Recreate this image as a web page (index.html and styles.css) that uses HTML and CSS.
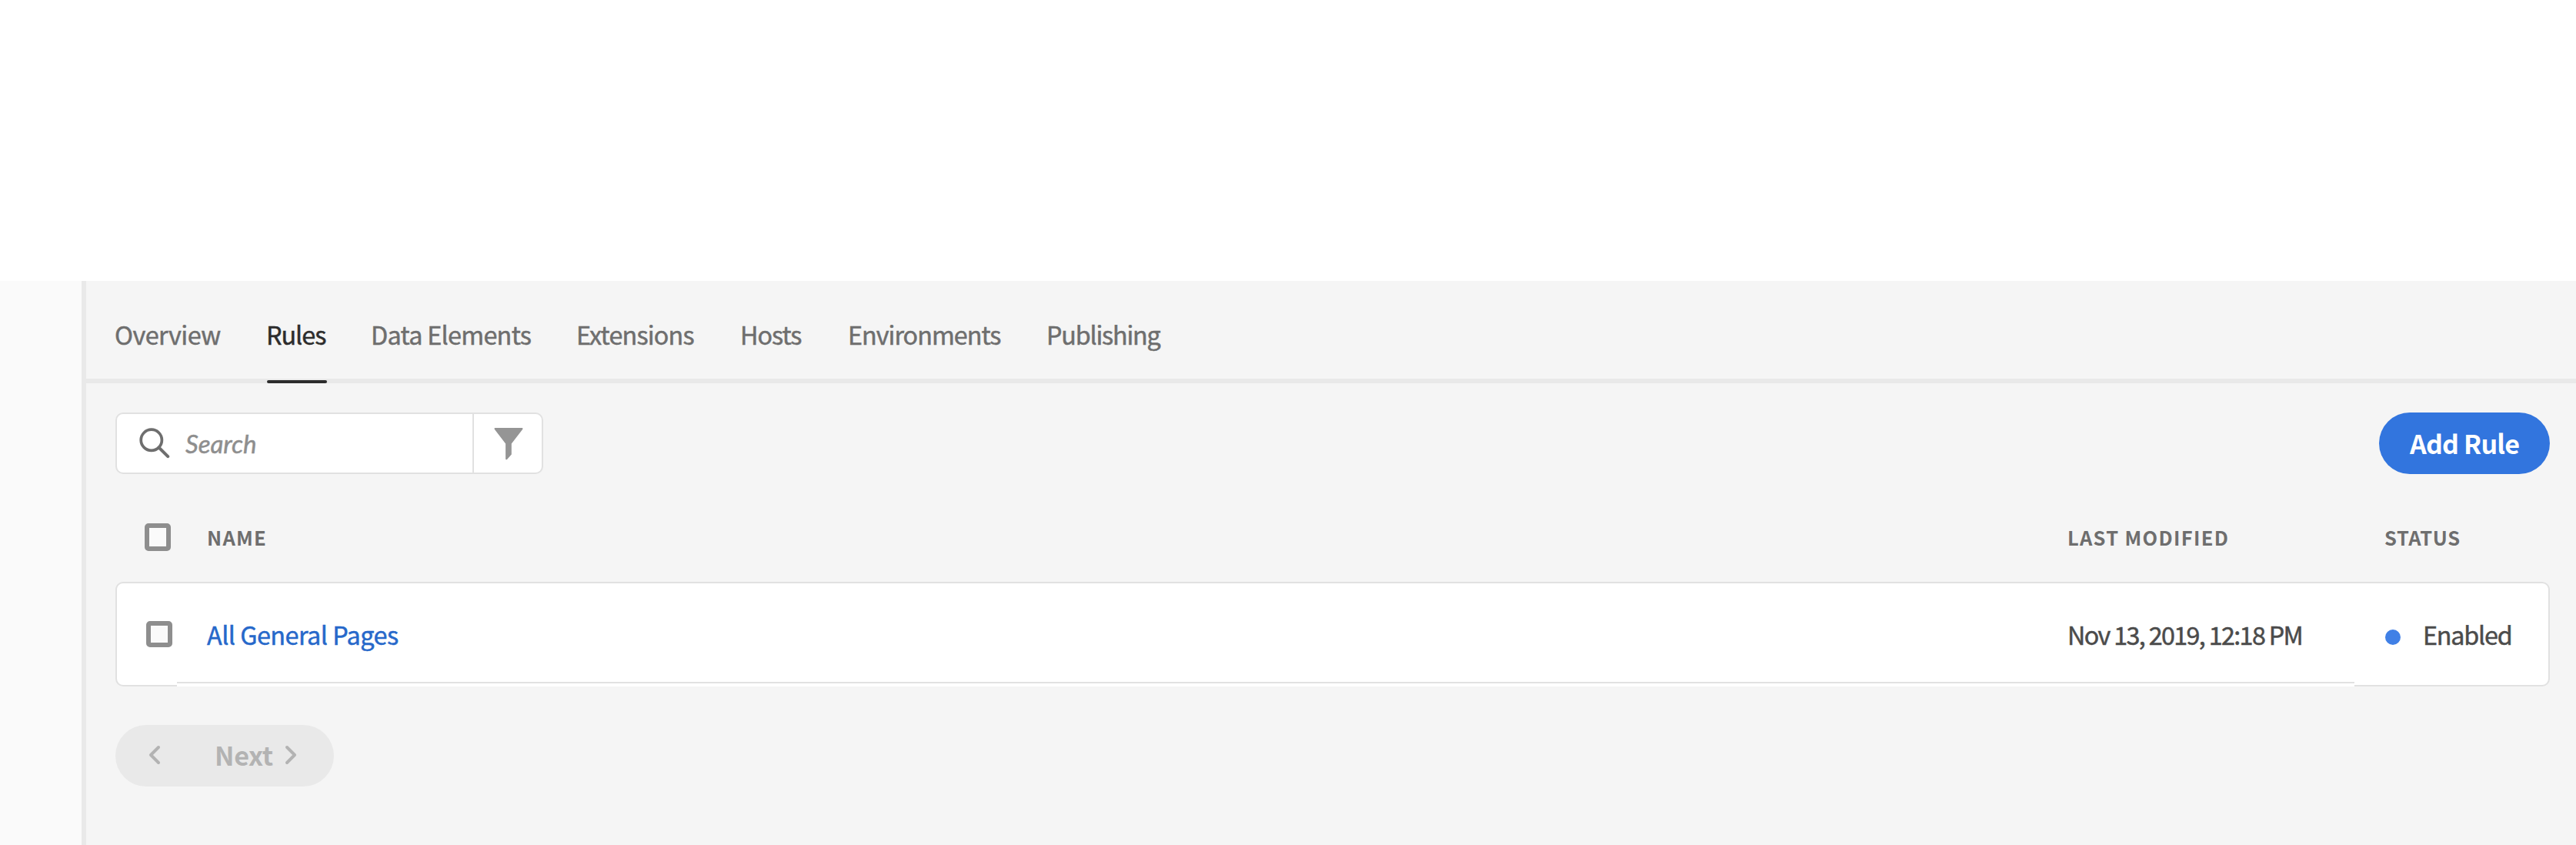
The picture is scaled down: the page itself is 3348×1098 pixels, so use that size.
FILE: index.html
```html
<!DOCTYPE html>
<html lang="en">
<head>
<meta charset="utf-8">
<title>Rules</title>
<link rel="stylesheet" href="styles.css">
</head>
<body>
<div class="shell">
  <aside class="rail"></aside>
  <main class="panel">
    <nav class="tabs">
      <a class="tab overview">Overview</a>
      <a class="tab rules active">Rules</a>
      <a class="tab elements">Data Elements</a>
      <a class="tab extensions">Extensions</a>
      <a class="tab hosts">Hosts</a>
      <a class="tab environments">Environments</a>
      <a class="tab publishing">Publishing</a>
    </nav>
    <section class="content">
      <div class="toolbar">
        <div class="search">
          <div class="field">
            <svg class="magnifier" width="40" height="40" viewBox="0 0 40 40"><circle cx="15.8" cy="15.8" r="13.6" fill="none" stroke="#6e6e6e" stroke-width="3.7"/><path d="M25.5 25.5L37.2 37.2" stroke="#6e6e6e" stroke-width="4" stroke-linecap="round"/></svg>
            <span class="placeholder">Search</span>
          </div>
          <button class="filter" aria-label="Filter"><svg width="38" height="42" viewBox="0 0 38 42"><path d="M1.4 0H36.6Q38 .3 37.3 1.8L22.8 20.5V34.5L17 41Q15.1 42 15.1 40V20.5L.7 1.8Q0 .3 1.4 0Z" fill="#959595"/></svg></button>
        </div>
        <button class="add">Add Rule</button>
      </div>
      <div class="grid head">
        <span class="check tall"></span>
        <span class="name">NAME</span>
        <span class="modified">LAST MODIFIED</span>
        <span class="status">STATUS</span>
      </div>
      <div class="grid row">
        <span class="check"></span>
        <a class="link">All General Pages</a>
        <span class="date">Nov 13, 2019, 12:18 PM</span>
        <span class="state"><i class="dot"></i><span class="label">Enabled</span></span>
      </div>
      <div class="pager">
        <svg class="prev" width="16" height="26" viewBox="0 0 16 26"><path d="M13 3L3 13L13 23" fill="none" stroke="#b3b3b3" stroke-width="4" stroke-linecap="round" stroke-linejoin="round"/></svg>
        <span class="next">Next</span>
        <svg width="16" height="26" viewBox="0 0 16 26"><path d="M3 3L13 13L3 23" fill="none" stroke="#b3b3b3" stroke-width="4" stroke-linecap="round" stroke-linejoin="round"/></svg>
      </div>
    </section>
  </main>
</div>
</body>
</html>
```
FILE: styles.css
```css
* { box-sizing: border-box; }
body {
  margin: 0;
  padding-top: 365px;
  height: 1098px;
  background: #fff;
  color: #4b4b4b;
  font-family: "Noto Sans CJK SC", "Noto Sans", sans-serif;
  font-size: 32.3px;
  line-height: 40px;
  white-space: nowrap;
  overflow: hidden;
}
button { font: inherit; border: 0; padding: 0; background: none; }
svg { display: block; flex: none; }
.shell { display: flex; height: 733px; }
.rail { width: 112px; background: #fafafa; border-right: 6px solid #e9e9e9; }
.panel { flex: 1; background: #f5f5f5; }
.tab, .placeholder, .link, .date, .label { -webkit-text-stroke: 0.5px currentColor; }

.tabs {
  display: flex;
  gap: 60px;
  height: 133px;
  padding: 49px 0 0 37px;
  border-bottom: 6px solid #e9e9e9;
}
.tab { position: relative; height: 84px; color: #6e6e6e; letter-spacing: -1px; }
.overview { width: 137px; letter-spacing: -0.5px; }
.rules { width: 76px; }
.elements { width: 207px; letter-spacing: -0.7px; }
.extensions { width: 153px; letter-spacing: -0.8px; }
.hosts { width: 80px; }
.environments { width: 198px; }
.publishing { letter-spacing: -1.2px; }
.active { color: #2c2c2c; }
.active::after {
  content: "";
  position: absolute;
  left: 1px;
  right: -3px;
  bottom: 0;
  height: 4px;
  border-radius: 2px;
  background: #2c2c2c;
}

.content { padding: 38px 34px 0 38px; }
.toolbar { display: flex; justify-content: space-between; }
.search {
  display: flex;
  width: 556px;
  height: 80px;
  border: 2px solid #e1e1e1;
  border-radius: 10px;
  background: #fff;
}
.field { flex: 1; display: flex; align-items: center; padding-left: 29px; }
.placeholder {
  margin-left: 20px;
  color: #8e8e8e;
  font-family: Lato, sans-serif;
  font-style: italic;
  font-size: 33px;
  letter-spacing: 0;
}
.filter { display: flex; width: 90px; padding: 18px 0 0 26px; border-left: 2px solid #e1e1e1; }
.add {
  width: 222px;
  height: 80px;
  border-radius: 40px;
  background: #3275de;
  color: #fff;
  font-size: 34px;
  font-weight: 700;
  letter-spacing: -0.8px;
}

.grid {
  display: grid;
  grid-template-columns: 81px 2418px 412px 1fr;
  align-items: center;
}
.head {
  height: 116px;
  margin-top: 24px;
  padding-left: 38px;
  color: #6e6e6e;
  font-size: 25.5px;
  font-weight: 700;
  letter-spacing: 1.3px;
}
.status { letter-spacing: 0.6px; }
.check {
  width: 34px;
  height: 34px;
  border: 6px solid #8e8e8e;
  border-radius: 5px;
  background: #fafafa;
}
.tall { height: 36px; }
.row {
  position: relative;
  height: 136px;
  padding-left: 38px;
  border: 2px solid #e1e1e1;
  border-radius: 10px;
  background: #fff;
  grid-template-columns: 79px 2418px 413px 1fr;
}
.row::after {
  content: "";
  position: absolute;
  left: 78px;
  right: 252px;
  bottom: -2px;
  height: 4px;
  border-top: 2px solid #e1e1e1;
  background: #fff;
}
.link { color: #2668ca; letter-spacing: -0.5px; }
.date { letter-spacing: -1.65px; }
.state { display: flex; align-items: center; gap: 29px; letter-spacing: -1.2px; }
.dot { width: 20px; height: 20px; margin-top: 8px; border-radius: 50%; background: #4080e6; }

.pager {
  display: flex;
  align-items: center;
  width: 284px;
  height: 80px;
  margin-top: 50px;
  padding: 0 0 2px 43px;
  border-radius: 40px;
  background: #e9e9e9;
  color: #b3b3b3;
  font-size: 34px;
  font-weight: 700;
}
.next { width: 91px; margin-left: 70px; letter-spacing: -0.3px; }
```
